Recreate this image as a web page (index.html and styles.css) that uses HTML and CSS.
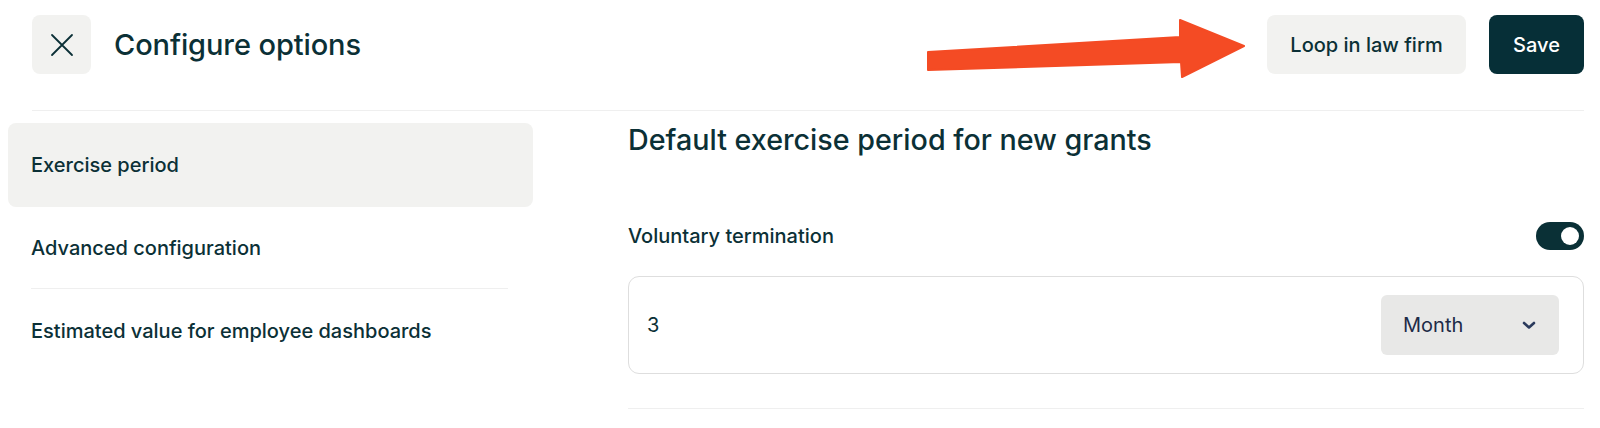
FILE: index.html
```html
<!DOCTYPE html>
<html lang="en">
<head>
<meta charset="utf-8">
<title>Configure options</title>
<link rel="stylesheet" href="styles.css">
</head>
<body>
<div class="page">
  <header class="header">
    <button class="close-btn" aria-label="Close">
      <svg width="24" height="24" viewBox="0 0 24 24" fill="none" stroke="#0b3036" stroke-width="1.8" stroke-linecap="round"><path d="M2 2 L22 22 M22 2 L2 22"/></svg>
    </button>
    <h1 class="title">Configure options</h1>
    <div class="actions">
      <button class="btn btn-secondary">Loop in law firm</button>
      <button class="btn btn-primary">Save</button>
    </div>
  </header>

  <div class="body">
    <nav class="sidebar">
      <div class="nav-item active">Exercise period</div>
      <div class="nav-item with-rule">Advanced configuration</div>
      <div class="nav-item">Estimated value for employee dashboards</div>
    </nav>

    <main class="content">
      <h2 class="section-title">Default exercise period for new grants</h2>
      <div class="toggle-row">
        <span class="toggle-label">Voluntary termination</span>
        <span class="toggle on"><span class="knob"></span></span>
      </div>
      <div class="input-box">
        <span class="input-value">3</span>
        <div class="select">
          <span>Month</span>
          <svg width="14" height="9" viewBox="0 0 14 9" fill="none" stroke="#2a3a5c" stroke-width="2.6" stroke-linecap="round" stroke-linejoin="round"><path d="M2 2 L7 6.5 L12 2"/></svg>
        </div>
      </div>
      <div class="rule"></div>
    </main>
  </div>

  <svg class="annotation-arrow" width="324" height="66" viewBox="0 0 324 66">
    <polygon points="3,35 255,20 255,3 319,29 257,60 256,45 3,53" fill="#f44b24" stroke="#f44b24" stroke-width="2" stroke-linejoin="round"/>
  </svg>
</div>
</body>
</html>
```

FILE: styles.css
```css
* { box-sizing: border-box; }

html, body {
  margin: 0;
  padding: 0;
  background: #ffffff;
}

body {
  font-family: Inter, "Noto Sans", "Liberation Sans", sans-serif;
  color: #0b3036;
  -webkit-font-smoothing: antialiased;
}

.page {
  position: relative;
  padding: 15px 16px 0 32px;
  width: 1600px;
  height: 428px;
  overflow: hidden;
}

.header {
  display: flex;
  align-items: center;
  padding-bottom: 36px;
  border-bottom: 1px solid #efefef;
}

.close-btn {
  width: 59px;
  height: 59px;
  border: none;
  border-radius: 8px;
  background: #f2f2f0;
  display: flex;
  align-items: center;
  justify-content: center;
  padding: 0;
}

.title {
  margin: 0 0 0 23px;
  font-size: 29px;
  font-weight: 500;
  letter-spacing: -0.1px;
  line-height: 36px;
}

.actions {
  margin-left: auto;
  display: flex;
  gap: 23px;
}

.btn {
  height: 59px;
  border: none;
  border-radius: 8px;
  font-family: inherit;
  font-size: 20px;
  font-weight: 500;
  padding: 0;
}

.btn-secondary {
  background: #f2f2f0;
  color: #0b3036;
  width: 199px;
}

.btn-primary {
  background: #062f37;
  color: #ffffff;
  width: 95px;
}

.body {
  display: grid;
  grid-template-columns: 525px 1fr;
  column-gap: 95px;
  margin-left: -24px;
}

.sidebar {
  margin-top: 12px;
  display: flex;
  flex-direction: column;
}

.nav-item {
  height: 83px;
  display: flex;
  align-items: center;
  padding: 0 23px;
  font-size: 20px;
  font-weight: 500;
  border-radius: 8px;
}

.nav-item.active {
  background: #f2f2f0;
  height: 84px;
}

.nav-item.with-rule {
  height: 82px;
  border-radius: 0;
  margin: 0 25px 0 23px;
  padding: 0;
  border-bottom: 1px solid #efefef;
}

.content {
  padding-top: 11px;
}

.section-title {
  margin: 0;
  font-size: 28.7px;
  font-weight: 500;
  line-height: 36px;
}

.toggle-row {
  margin-top: 64px;
  height: 28px;
  display: flex;
  align-items: center;
  justify-content: space-between;
}

.toggle-label {
  font-size: 20px;
  font-weight: 500;
}

.toggle {
  width: 48px;
  height: 28px;
  border-radius: 14px;
  background: #0a3036;
  display: flex;
  align-items: center;
  justify-content: flex-end;
  padding-right: 5px;
}

.knob {
  width: 18px;
  height: 18px;
  border-radius: 50%;
  background: #ffffff;
}

.input-box {
  margin-top: 26px;
  height: 98px;
  border: 1px solid #dedede;
  border-radius: 11px;
  padding: 18px 24px 18px 18px;
  display: flex;
  align-items: center;
  justify-content: space-between;
}

.input-value {
  font-size: 20px;
  font-weight: 400;
}

.select {
  width: 178px;
  height: 60px;
  background: #e8e8e7;
  border-radius: 6px;
  padding: 0 23px 0 22px;
  display: flex;
  align-items: center;
  justify-content: space-between;
  font-size: 20px;
  color: #1e2b48;
}

.rule {
  margin-top: 34px;
  border-top: 1px solid #efefef;
}

.annotation-arrow {
  position: absolute;
  left: 925px;
  top: 17px;
}
```
